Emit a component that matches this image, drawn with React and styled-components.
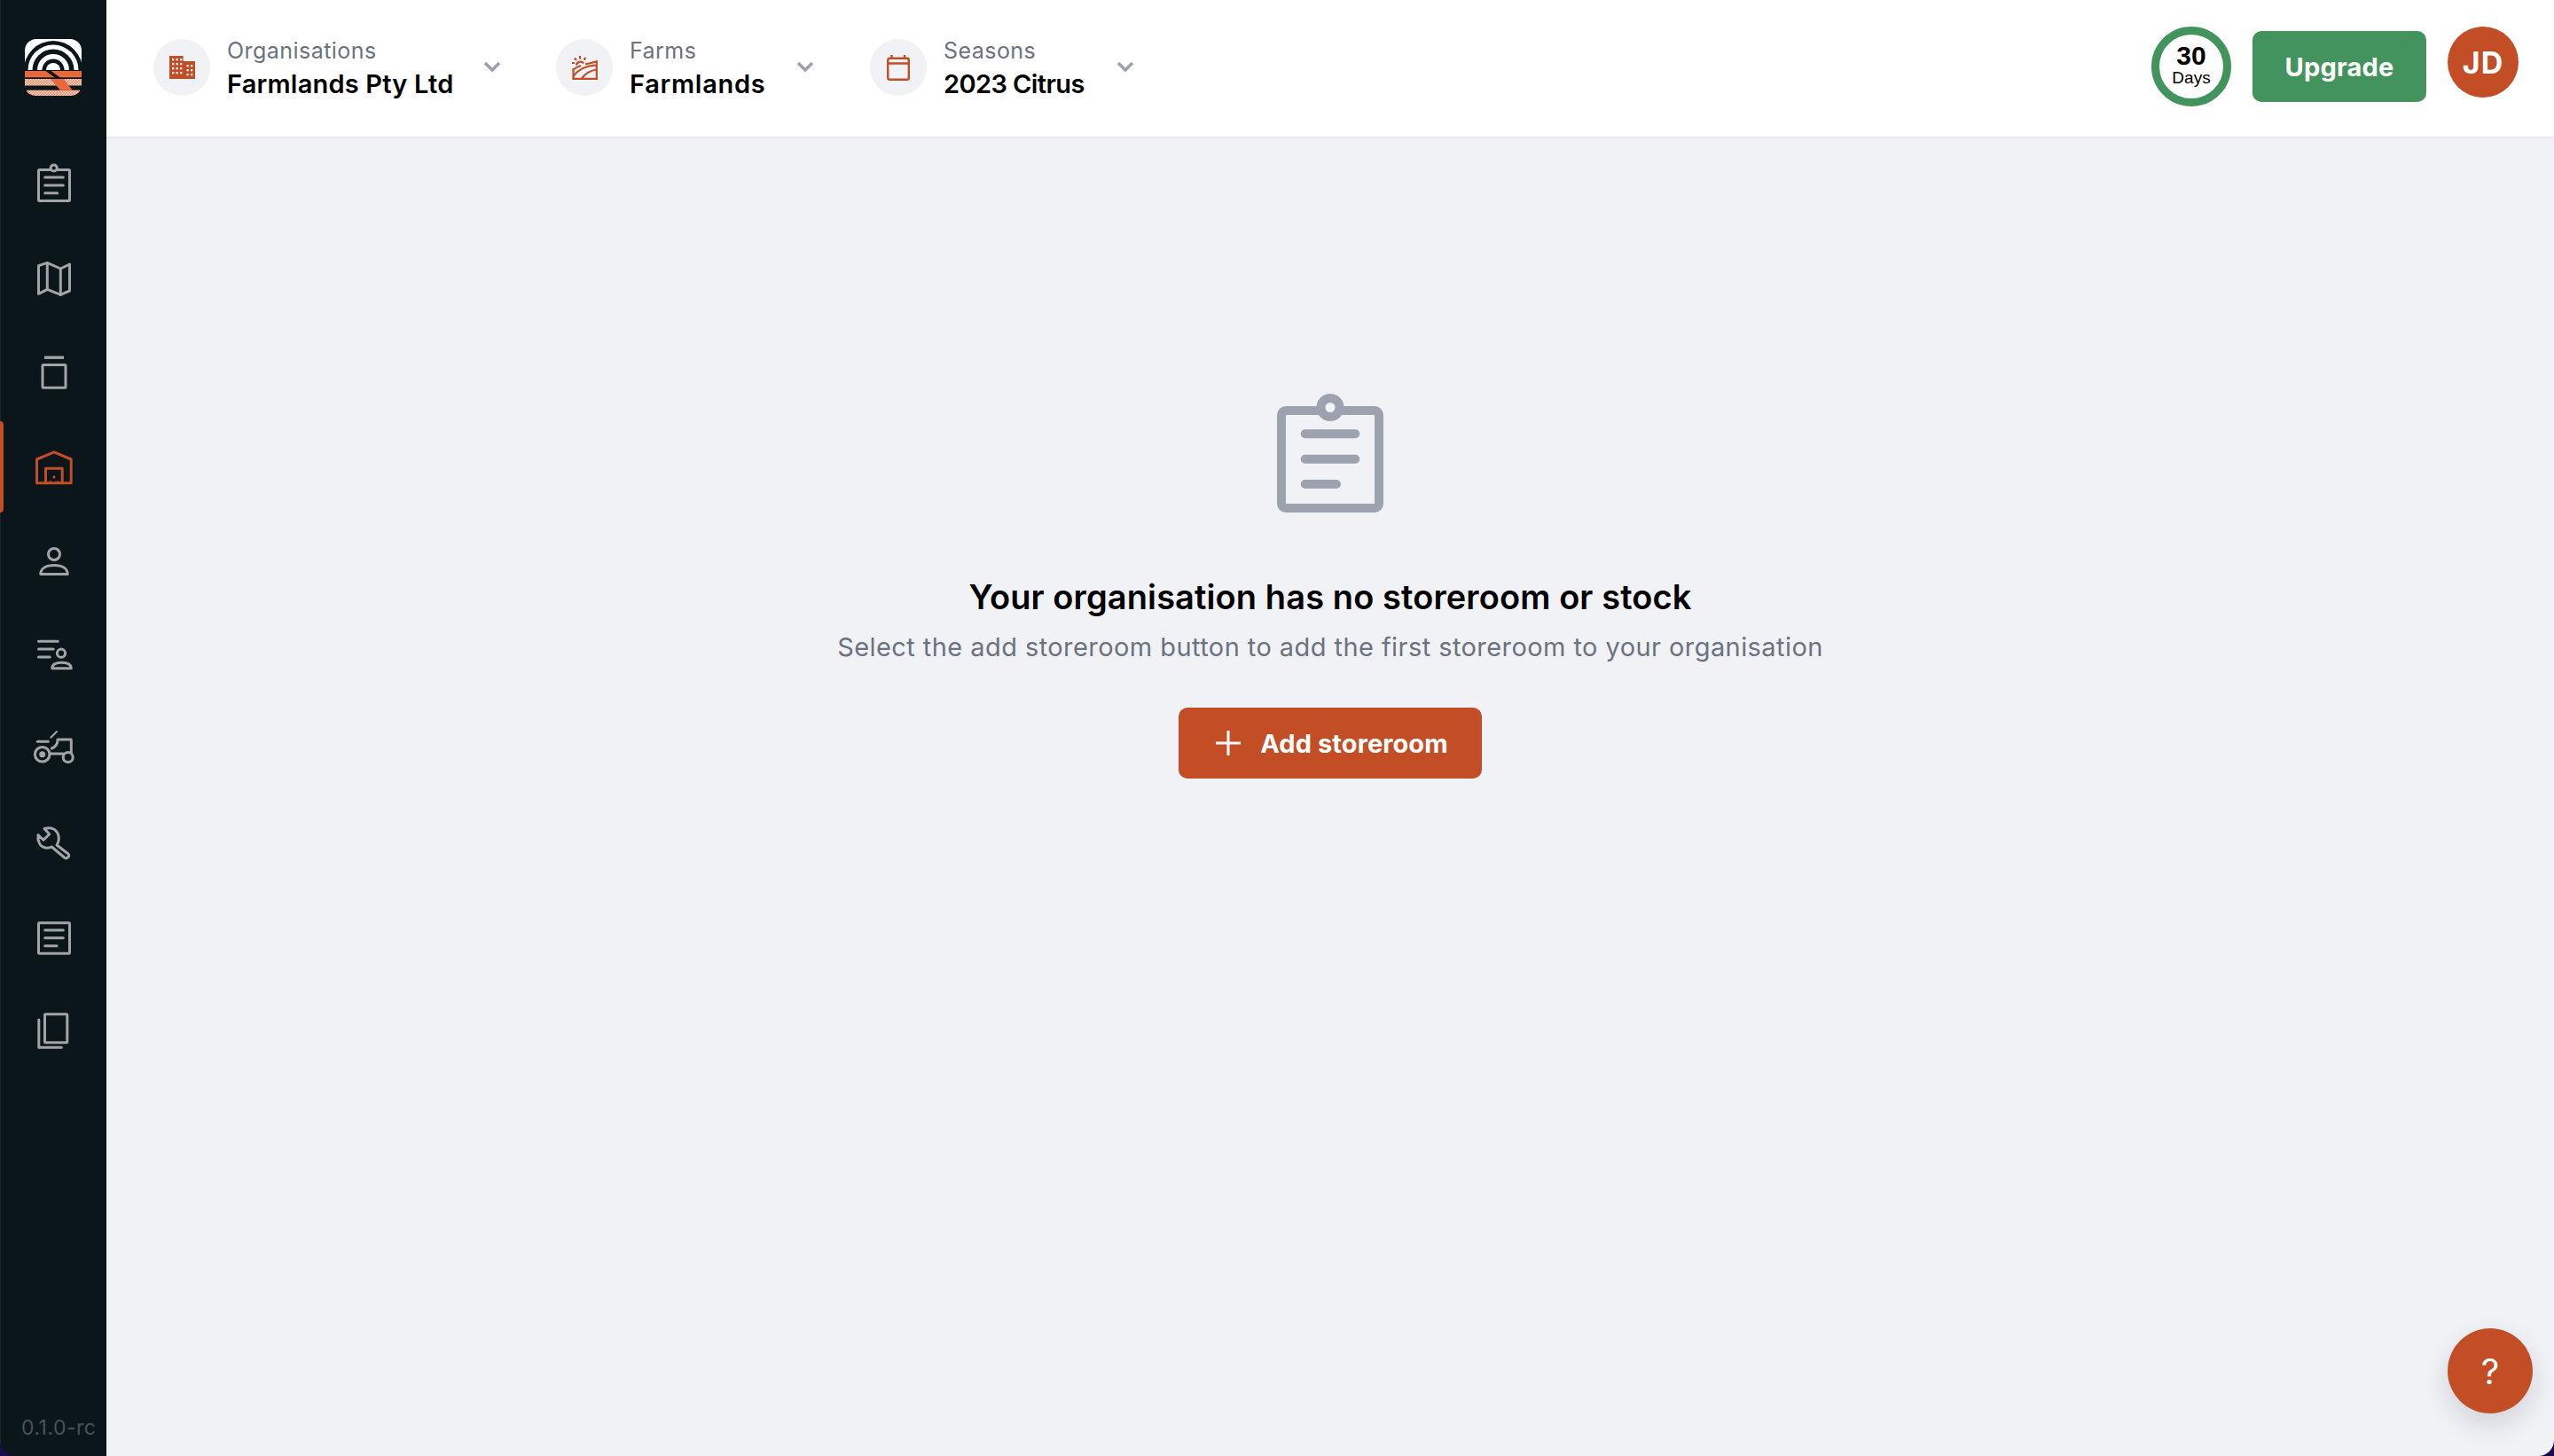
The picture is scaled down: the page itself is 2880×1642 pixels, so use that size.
import React from "react";
import styled, { createGlobalStyle } from "styled-components";

const GlobalStyle = createGlobalStyle`
  html, body {
    margin: 0;
    padding: 0;
    height: 100%;
    background: #1c0b4f;
  }
  #root {
    height: 100%;
  }
  * {
    box-sizing: border-box;
  }
`;

const FONT = `Inter, "Open Sans", "Liberation Sans", sans-serif`;
const ORANGE = "#c34e25";

const Shell = styled.div`
  display: flex;
  width: 2880px;
  height: 1642px;
  font-family: ${FONT};
  overflow: hidden;
  border-radius: 0 0 18px 18px;
`;

const Sidebar = styled.aside`
  display: flex;
  flex-direction: column;
  flex: 0 0 120px;
  height: 100%;
  background: #0b161b;
  border-left: 1px solid #1d2a2b;
`;

const LogoBox = styled.div`
  display: flex;
  justify-content: center;
  flex: 0 0 154px;
  padding: 44px 1px 0 0;
`;

const NavList = styled.nav`
  display: flex;
  flex-direction: column;
  flex: 1;
`;

const NavItem = styled.a`
  display: flex;
  align-items: center;
  justify-content: center;
  height: 106.2px;
  padding-left: 1px;
  position: relative;
  color: ${({ $active }) => ($active ? ORANGE : "#a3a4a8")};

  &::before {
    content: "";
    display: ${({ $active }) => ($active ? "block" : "none")};
    position: absolute;
    left: -1px;
    top: 2px;
    bottom: 1px;
    width: 4px;
    background: ${ORANGE};
    border-radius: 0 4px 4px 0;
  }
`;

const NavIcon = styled.svg`
  width: 48px;
  height: 48px;
  overflow: visible;
  fill: none;
  stroke: currentColor;
  stroke-width: 3;
  stroke-linecap: round;
  stroke-linejoin: round;
`;

const Version = styled.div`
  padding: 0 0 17px 23px;
  font-size: 23px;
  line-height: 30px;
  letter-spacing: 0.5px;
  color: #4a5158;
  white-space: nowrap;
`;

const Content = styled.div`
  display: flex;
  flex-direction: column;
  flex: 1;
  height: 100%;
  position: relative;
  background: #f1f2f6;
  overflow: hidden;
`;

const TopBar = styled.header`
  display: flex;
  align-items: center;
  justify-content: space-between;
  flex: 0 0 156px;
  padding: 0 40px 4px 53px;
  background: #fff;
  border-bottom: 2px solid #e7e8ec;
`;

const Selectors = styled.div`
  display: flex;
  align-items: center;
  margin-top: 2px;
`;

const Selector = styled.div`
  display: flex;
  align-items: center;
  width: ${({ $width }) => $width}px;
`;

const SelectorIcon = styled.div`
  display: flex;
  align-items: center;
  justify-content: center;
  flex: 0 0 64px;
  height: 64px;
  border-radius: 50%;
  background: #f1f2f6;
  color: ${ORANGE};
`;

const SelectorText = styled.div`
  display: flex;
  flex-direction: column;
  margin-left: 19px;
  padding-top: 2px;
`;

const SelectorLabel = styled.span`
  font-size: 25px;
  line-height: 36px;
  letter-spacing: 0.45px;
  color: #6b7280;
`;

const SelectorValue = styled.span`
  font-size: 29px;
  line-height: 40px;
  font-weight: 600;
  color: #000;
  letter-spacing: ${({ $tracking }) => $tracking}px;
  white-space: nowrap;
`;

const Chevron = styled.svg`
  width: 20px;
  height: 14px;
  margin-left: ${({ $gap }) => $gap}px;
  fill: none;
  stroke: #9ca3af;
  stroke-width: 3.6;
`;

const RightTools = styled.div`
  display: flex;
  align-items: center;
`;

const TrialRing = styled.div`
  display: flex;
  flex-direction: column;
  align-items: center;
  justify-content: center;
  width: 90px;
  height: 90px;
  border-radius: 50%;
  border: 9px solid #43945c;
  background: #fff;
  font-family: "Liberation Sans", Arial, sans-serif;
  color: #000;
`;

const TrialNumber = styled.span`
  font-size: 30px;
  line-height: 25px;
  font-weight: 700;
`;

const TrialLabel = styled.span`
  font-size: 19px;
  line-height: 25px;
`;

const UpgradeButton = styled.button`
  display: flex;
  align-items: center;
  justify-content: center;
  width: 196px;
  height: 80px;
  margin: 0 24px;
  border: 0;
  border-radius: 10px;
  background: #43945c;
  color: #fff;
  font-family: ${FONT};
  font-size: 29px;
  font-weight: 700;
  letter-spacing: 0.2px;
`;

const Avatar = styled.div`
  display: flex;
  align-items: center;
  justify-content: center;
  width: 80px;
  height: 80px;
  margin-bottom: 10px;
  border-radius: 50%;
  background: ${ORANGE};
  color: #fff;
  font-size: 34px;
  font-weight: 700;
  letter-spacing: 1px;
`;

const EmptyState = styled.main`
  display: flex;
  flex-direction: column;
  align-items: center;
  flex: 1;
  padding-top: 288px;
`;

const EmptyIcon = styled.svg`
  width: 120px;
  height: 134px;
  color: #9ca3af;
`;

const EmptyTitle = styled.h1`
  margin: 67px 0 0;
  font-size: 38px;
  line-height: 56px;
  font-weight: 600;
  color: #000;
  letter-spacing: 0.1px;
`;

const EmptyText = styled.p`
  margin: 7px 0 0;
  font-size: 29px;
  line-height: 44px;
  color: #6b7280;
  letter-spacing: 0.43px;
`;

const AddButton = styled.button`
  display: flex;
  align-items: center;
  justify-content: center;
  gap: 22px;
  width: 342px;
  height: 80px;
  margin-top: 46px;
  padding: 0 0 0 4px;
  border: 0;
  border-radius: 10px;
  background: ${ORANGE};
  color: #fff;
  font-family: ${FONT};
  font-size: 29px;
  font-weight: 700;
  letter-spacing: 0.1px;
`;

const HelpButton = styled.button`
  position: absolute;
  right: 24px;
  bottom: 48px;
  display: flex;
  align-items: center;
  justify-content: center;
  width: 96px;
  height: 96px;
  border: 0;
  border-radius: 50%;
  background: ${ORANGE};
  color: #fff;
  font-family: ${FONT};
  font-size: 40px;
  font-weight: 400;
  box-shadow: 0 12px 30px rgba(17, 24, 39, 0.14);
`;

const Logo = () => (
  <svg width="64" height="64" viewBox="0 0 64 64">
    <defs>
      <pattern id="dither" width="3" height="3" patternUnits="userSpaceOnUse">
        <rect width="3" height="3" fill="#ec7f58" />
        <rect width="1.500" height="1.500" fill="#fde3d8" />
        <rect x="1.500" y="1.500" width="1.500" height="1.500" fill="#fde3d8" />
      </pattern>
      <clipPath id="logoClip">
        <path d="M13 0H51A13 13 0 0 1 64 13V51C64 60 58 64 51 64H13C6 64 0 60 0 51V13A13 13 0 0 1 13 0Z" />
      </clipPath>
    </defs>
    <g clipPath="url(#logoClip)">
      <rect width="64" height="36" fill="#fff" />
      <circle cx="32" cy="35" r="33" fill="#0b161b" />
      <circle cx="32" cy="35" r="28.500" fill="#fff" />
      <circle cx="32" cy="35" r="23.500" fill="#0b161b" />
      <circle cx="32" cy="35" r="18" fill="#fff" />
      <circle cx="32" cy="35" r="12.500" fill="#0b161b" />
      <circle cx="32" cy="35" r="8" fill="#fff" />
      <rect y="35" width="64" height="29" fill="#0b161b" />
      <rect y="36" width="64" height="7.300" fill="#e8693c" />
      <rect y="45" width="64" height="7.500" fill="url(#dither)" />
      <rect x="2" y="57.700" width="60" height="6.300" fill="url(#dither)" />
      <path d="M22 35H28L42 45H36Z" fill="#0b161b" />
      <path d="M28.700 45H43.700L53.700 57.700H40Z" fill="#e8693c" />
    </g>
  </svg>
);

const navIcons = [
  <>
    <path d="M19.500 8.500H7.500a1 1 0 0 0-1 1v33a1 1 0 0 0 1 1h33a1 1 0 0 0 1-1v-33a1 1 0 0 0-1-1H28" />
    <circle cx="23.700" cy="6.500" r="3.600" />
    <path d="M13.700 17H34.300M13.700 26H34.300M13.700 34.700H27.700" />
  </>,
  <g transform="translate(0 0.700)">
    <path d="M6.500 10L16.300 6.700L31.300 13.300L41.500 8.300V38.300L31.300 42.700L16.300 36.700L6.500 41.700Z" />
    <path d="M16.300 6.700V36.700M31.300 13.300V42.700" />
  </g>,
  <g transform="translate(0 1.500)">
    <path d="M13 6.700H35" strokeWidth="3.400" strokeLinecap="butt" />
    <rect x="11" y="15" width="26" height="25.800" rx="1" />
  </g>,
  <g transform="translate(0 3.300)">
    <path d="M4.500 39.500V12.700L24 4.500L43.200 12.700V39.500Z" />
    <path d="M14.500 39.500V23H33.200V39.500" />
    <path d="M22.700 32.700h2.600M18.500 38.700h2.600M26.800 38.700h2.600" strokeLinecap="butt" strokeWidth="2.800" />
  </g>,
  <g transform="translate(0 2)">
    <circle cx="24" cy="15" r="6.500" />
    <path d="M8.800 37.500C8.800 31 15 27.500 24 27.500S39.200 31 39.200 37.500Z" />
  </g>,
  <>
    <path d="M6.500 9.300H28.200M6.500 18H23.200M6.500 27H19.200" />
    <circle cx="32" cy="22.700" r="4.600" />
    <path d="M21.800 39.800C21.800 35.500 26 33.300 32.500 33.300S43.200 35.500 43.200 39.800Z" />
  </>,
  <>
    <circle cx="10.700" cy="30.700" r="8.300" />
    <circle cx="10.700" cy="30.700" r="3.500" fill="currentColor" stroke="none" />
    <circle cx="39.700" cy="34" r="5.500" />
    <path d="M5.300 16.300H17.300M19.700 30H34M21.300 24C25.500 22.500 28 19 28 14H43.300V28" />
    <path d="M20.300 11.700L27 5" strokeWidth="2" />
  </>,
  <path d="M13 8.500L18.700 14.700L12 21.300L6 15.700C5 22 8 29 14 30C17 30.500 19.500 30 21.300 29L35.500 41C38 43.500 42.500 39.500 40 37L27 27C31 21 29.500 12 23.500 9C20 7.300 16 7.500 13 8.500Z" />,
  <>
    <rect x="6.500" y="7.800" width="35" height="34.400" rx="1" />
    <path d="M13.700 16H34.300M13.700 24.700H34.300M13.700 33.700H27" />
  </>,
  <>
    <rect x="13.500" y="4.800" width="25.300" height="32" rx="1" />
    <path d="M6.800 11V42.200H32.300" />
  </>,
];

const towerWindows = [3, 7.5, 12].flatMap((x) => [3, 8, 13, 18].map((y) => [x, y]));
const wingWindows = [19.5, 24].flatMap((x) => [10, 15, 20].map((y) => [x, y]));

const BuildingIcon = () => (
  <svg width="29" height="26" viewBox="0 0 29 26">
    <path fill="currentColor" d="M0 0H15.500V6H29V26H0Z" />
    {[...towerWindows, ...wingWindows].map(([x, y]) => (
      <rect key={`${x}-${y}`} x={x} y={y} width="2.300" height="2.300" fill="#f1f2f6" />
    ))}
  </svg>
);

const FarmIcon = () => (
  <svg width="29" height="27" viewBox="0 0 29 27" fill="none" stroke="currentColor" strokeWidth="2.200">
    <path d="M1.500 14V25.800H27.800V6.500L15 9.500" />
    <path d="M1.500 23C7 15.500 15 11 27.800 10.500M11 25.500C15 20 20 16.500 27.800 15.500M1.500 15.500C4 13.500 7 12 10 11" />
    <path d="M5 10.500A4.500 4.500 0 0 1 13 8.500M9 0V3.500M3 2.500L5 5M15.500 2L13.500 4.500M0 8H3" />
  </svg>
);

const CalendarIcon = () => (
  <svg width="26" height="29" viewBox="0 0 26 29" fill="none" stroke="currentColor" strokeWidth="2.400">
    <rect x="1.200" y="3.800" width="23.600" height="24" rx="2" />
    <path d="M1.200 9.500H24.800M5.500 0V3.800M20 0V3.800" />
  </svg>
);

const ChevronDown = ({ gap }) => (
  <Chevron $gap={gap} viewBox="0 0 20 14">
    <path d="M2 2l8 8 8-8" />
  </Chevron>
);

const selectors = [
  { label: "Organisations", value: "Farmlands Pty Ltd", icon: <BuildingIcon />, width: 454, gap: 33, tracking: 0.2 },
  { label: "Farms", value: "Farmlands", icon: <FarmIcon />, width: 354, gap: 35, tracking: 0.7 },
  { label: "Seasons", value: "2023 Citrus", icon: <CalendarIcon />, width: 330, gap: 36, tracking: -0.6 },
];

const App = () => {
  return (
    <>
      <GlobalStyle />
      <Shell>
        <Sidebar>
          <LogoBox>
            <Logo />
          </LogoBox>
          <NavList>
            {navIcons.map((icon, i) => (
              <NavItem key={i} $active={i === 3}>
                <NavIcon viewBox="0 0 48 48">{icon}</NavIcon>
              </NavItem>
            ))}
          </NavList>
          <Version>0.1.0-rc</Version>
        </Sidebar>
        <Content>
          <TopBar>
            <Selectors>
              {selectors.map((s) => (
                <Selector key={s.label} $width={s.width}>
                  <SelectorIcon>{s.icon}</SelectorIcon>
                  <SelectorText>
                    <SelectorLabel>{s.label}</SelectorLabel>
                    <SelectorValue $tracking={s.tracking}>{s.value}</SelectorValue>
                  </SelectorText>
                  <ChevronDown gap={s.gap} />
                </Selector>
              ))}
            </Selectors>
            <RightTools>
              <TrialRing>
                <TrialNumber>30</TrialNumber>
                <TrialLabel>Days</TrialLabel>
              </TrialRing>
              <UpgradeButton>Upgrade</UpgradeButton>
              <Avatar>JD</Avatar>
            </RightTools>
          </TopBar>
          <EmptyState>
            <EmptyIcon viewBox="0 0 120 134">
              <path
                fill="currentColor"
                fillRule="evenodd"
                d="M10 14H110A10 10 0 0 1 120 24V124A10 10 0 0 1 110 134H10A10 10 0 0 1 0 124V24A10 10 0 0 1 10 14ZM10 24V124H110V24Z"
              />
              <circle cx="60" cy="15.500" r="15.500" fill="currentColor" />
              <circle cx="60" cy="15.500" r="5.500" fill="#f1f2f6" />
              <path
                fill="none"
                stroke="currentColor"
                strokeWidth="10"
                strokeLinecap="round"
                d="M31.700 45.300H88.300M31.700 73.700H88.300M31.700 102H67"
              />
            </EmptyIcon>
            <EmptyTitle>Your organisation has no storeroom or stock</EmptyTitle>
            <EmptyText>Select the add storeroom button to add the first storeroom to your organisation</EmptyText>
            <AddButton>
              <svg width="28" height="28" viewBox="0 0 28 28" stroke="#fff" strokeWidth="3">
                <path d="M14 0V28M0 14H28" />
              </svg>
              Add storeroom
            </AddButton>
          </EmptyState>
          <HelpButton>?</HelpButton>
        </Content>
      </Shell>
    </>
  );
};

export default App;
